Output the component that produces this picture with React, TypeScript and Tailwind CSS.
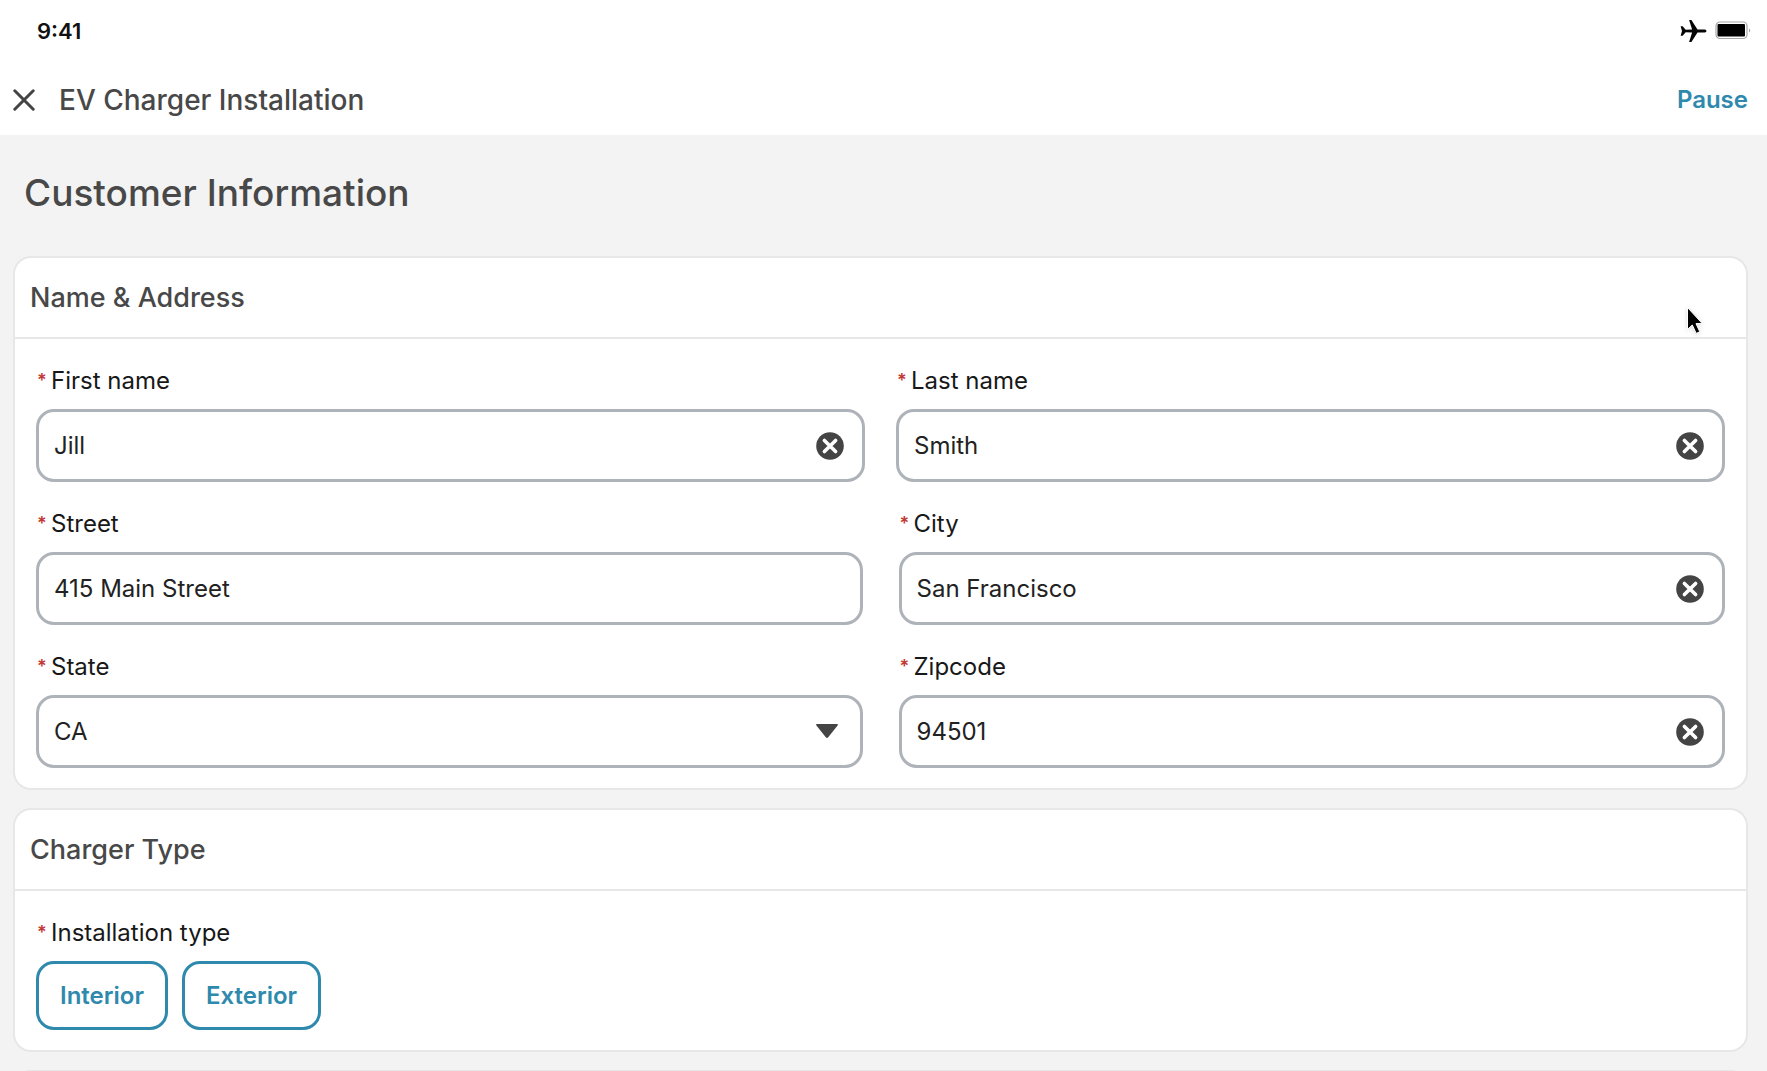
import { useState } from "react";

const heading = "font-medium text-[#484848]";

function AirplaneIcon() {
  return (
    <svg viewBox="0 0 28 24" className="h-6 w-7" aria-hidden="true">
      <path
        d="M27.5 12c0 .9-1 1.5-2.4 1.5h-6.6L12.4 23h-2.3l3-9.4-6.4-.3-3.1 3.5H1.6L3 12 1.6 7.2h2l3.1 3.5 6.4-.3-3-9.4h2.3l6.1 9.5h6.6c1.4 0 2.4.6 2.4 1.5Z"
        fill="#050505"
      />
    </svg>
  );
}

function BatteryIcon() {
  return (
    <svg viewBox="0 0 36 20" className="h-5 w-9" aria-hidden="true">
      <rect x="1" y="1" width="31" height="16.5" rx="4" fill="none" stroke="#a5a5a5" strokeWidth="1.2" />
      <rect x="2.5" y="3" width="27.5" height="12.5" rx="1" fill="#000" />
      <path d="M34 7.5c1.6.5 1.6 3.5 0 4Z" fill="#a5a5a5" />
    </svg>
  );
}

function CloseIcon() {
  return (
    <svg viewBox="0 0 22 22" className="size-[22px]" aria-hidden="true">
      <path d="M1.8 1.8l18.4 18.4M20.2 1.8L1.8 20.2" stroke="#444" strokeWidth="3" strokeLinecap="round" />
    </svg>
  );
}

function ClearIcon() {
  return (
    <svg viewBox="0 0 28 28" className="size-7" aria-hidden="true">
      <circle cx="14" cy="14" r="13.8" fill="#444" />
      <path d="M8.4 8.4l11.2 11.2M19.6 8.4L8.4 19.6" stroke="#fff" strokeWidth="3.6" strokeLinecap="round" />
    </svg>
  );
}

function Required() {
  return <span className="mr-1.5 inline-block w-2 text-lg leading-7 font-semibold text-[#c23934]">*</span>;
}

const labelClass = "flex h-7 pl-[1px] text-2xl leading-7 text-[#181818]";
const boxClass =
  "h-[73px] w-full appearance-none rounded-[18px] border-[3px] border-[#aeb3b9] bg-white px-[15px] text-2xl text-[#222] outline-none focus:border-[#2e89ad]";

function TextField({ id, label, initial, clearable = true }: { id: string; label: string; initial: string; clearable?: boolean }) {
  const [value, setValue] = useState(initial);
  return (
    <div className="flex min-w-0 flex-col gap-3.5">
      <label htmlFor={id} className={labelClass}>
        <Required />
        {label}
      </label>
      <div className="relative">
        <input id={id} value={value} onChange={(e) => setValue(e.target.value)} className={boxClass} />
        {clearable && (
          <button
            type="button"
            aria-label={`Clear ${label}`}
            onClick={() => setValue("")}
            className="absolute inset-y-0 right-[21px] flex items-center"
          >
            <ClearIcon />
          </button>
        )}
      </div>
    </div>
  );
}

function StateField() {
  return (
    <div className="flex min-w-0 flex-col gap-3.5">
      <label htmlFor="state" className={labelClass}>
        <Required />
        State
      </label>
      <div className="relative">
        <select id="state" defaultValue="CA" className={boxClass}>
          <option>CA</option>
          <option>NV</option>
          <option>OR</option>
        </select>
        <svg viewBox="0 0 22 14" className="pointer-events-none absolute top-[29px] right-[25px] h-3.5 w-[22px]" aria-hidden="true">
          <path d="M1 0h20c.9 0 1.2.9.6 1.6L12.2 13.2c-.7.9-1.7.9-2.4 0L.4 1.6C-.2.9.1 0 1 0Z" fill="#444" />
        </svg>
      </div>
    </div>
  );
}

function Card({ title, children }: { title: string; children?: React.ReactNode }) {
  return (
    <section className="shrink-0 rounded-[18px] border-2 border-[#e7e7e7] bg-white">
      <div className="flex h-[81px] items-center border-b-2 border-[#e7e7e7] px-[15px]">
        <h2 className={`${heading} text-[27px] leading-10`}>{title}</h2>
      </div>
      <div className="flex flex-col gap-7 px-[21px] pt-7 pb-5">{children}</div>
    </section>
  );
}

export default function App() {
  const [type, setType] = useState("");
  return (
    <div className="relative flex h-screen flex-col overflow-hidden bg-[#f3f3f3] font-['Inter',sans-serif]">
      <header className="shrink-0 bg-white">
        <div className="flex h-[62px] items-center justify-between pr-4 pl-[37px]">
          <span className="text-[22px] font-semibold text-[#111]">9:41</span>
          <div className="flex items-center gap-2">
            <AirplaneIcon />
            <BatteryIcon />
          </div>
        </div>
        <div className="flex h-[73px] items-center pt-0.5 pr-[19px] pl-[13px]">
          <button type="button" aria-label="Close">
            <CloseIcon />
          </button>
          <h3 className={`${heading} ml-6 text-[28px] leading-10`}>EV Charger Installation</h3>
          <button type="button" className="ml-auto text-2xl font-semibold text-[#2e89ad]">
            Pause
          </button>
        </div>
      </header>

      <h1 className={`${heading} flex h-[121px] shrink-0 items-center px-6 pb-1.5 text-[37px]`}>Customer Information</h1>

      <main className="flex flex-col gap-[18px] pr-[19px] pl-[13px]">
        <Card title="Name & Address">
          <div className="grid grid-cols-2 gap-[31px]">
            <TextField id="first" label="First name" initial="Jill" />
            <TextField id="last" label="Last name" initial="Smith" />
          </div>
          <div className="grid grid-cols-2 gap-9">
            <TextField id="street" label="Street" initial="415 Main Street" clearable={false} />
            <TextField id="city" label="City" initial="San Francisco" />
          </div>
          <div className="grid grid-cols-2 gap-9">
            <StateField />
            <TextField id="zip" label="Zipcode" initial="94501" />
          </div>
        </Card>

        <Card title="Charger Type">
          <div role="group" aria-labelledby="install-type" className="flex flex-col gap-3.5">
            <span id="install-type" className={labelClass}>
              <Required />
              Installation type
            </span>
            <div className="flex gap-3.5">
              {["Interior", "Exterior"].map((name) => (
                <button
                  key={name}
                  type="button"
                  aria-pressed={type === name}
                  onClick={() => setType(name)}
                  className="h-[69px] rounded-[18px] border-[3px] border-[#2e89ad] px-[21px] text-2xl font-semibold text-[#2e89ad] aria-pressed:bg-[#e6f3f8]"
                >
                  {name}
                </button>
              ))}
            </div>
          </div>
        </Card>

        <section className="h-24 shrink-0 rounded-[18px] border-2 border-[#e7e7e7] bg-white" />
      </main>

      <svg
        viewBox="0 0 20 30"
        className="pointer-events-none absolute top-[306px] right-[61px] h-[30px] w-5 drop-shadow-sm"
        aria-hidden="true"
      >
        <path
          d="M1.5 1.5v21.8l4.8-4.3 3.9 8.4 3.6-1.6-3.8-8.2h6.3Z"
          fill="#000"
          stroke="#fff"
          strokeWidth="1"
          strokeLinejoin="round"
        />
      </svg>
    </div>
  );
}
